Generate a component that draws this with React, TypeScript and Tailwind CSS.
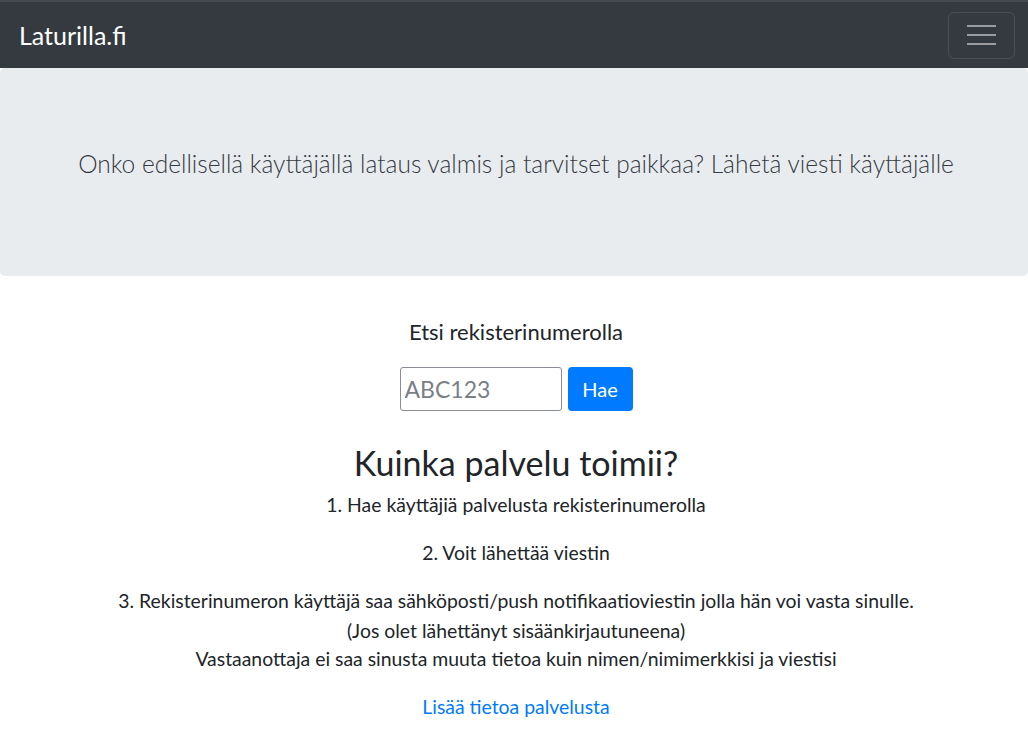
import React from "react";

const font = { fontFamily: "Lato, 'Open Sans', sans-serif" };

const Navbar = () => (
  <nav className="h-[68px] bg-[#343a40] border-t-2 border-[#45484f] flex items-center justify-between pl-[19px] pr-[13px]">
    <a className="text-white text-[25px] leading-none">Laturilla.fi</a>
    <button className="w-[67px] h-[47px] border border-white/10 rounded-[6px] flex flex-col items-center justify-center gap-[7px]">
      <span className="block w-[29px] h-[2px] bg-[#9a9ca0]" />
      <span className="block w-[29px] h-[2px] bg-[#9a9ca0]" />
      <span className="block w-[29px] h-[2px] bg-[#9a9ca0]" />
    </button>
  </nav>
);

export default function App() {
  return (
    <div style={font} className="min-h-[747px] bg-white text-[#212529]">
      <Navbar />
      <div className="bg-[#e9ecef] rounded-[5px] h-[208px] flex items-center justify-center pl-[4px]">
        <p className="text-[24.5px] font-light text-[#343a42] leading-[30px] -mt-[16px]">
          Onko edellisellä käyttäjällä lataus valmis ja tarvitset paikkaa? Lähetä viesti käyttäjälle
        </p>
      </div>

      <div className="flex flex-col items-center text-center pl-[4px]">
        <h5 className="mt-[44px] h-[24px] leading-[24px] text-[22px]">Etsi rekisterinumerolla</h5>
        <form className="mt-[23px] flex gap-[6px]" onSubmit={(e) => e.preventDefault()}>
          <input
            placeholder="ABC123"
            className="w-[162px] h-[44px] border border-[#8a8d93] rounded-[3px] px-[4px] text-[23px] placeholder:text-[#7a7f86] outline-none"
          />
          <button className="w-[65px] h-[44px] bg-[#007bff] text-white rounded-[4px] text-[20px]">Hae</button>
        </form>

        <h2 className="mt-[33px] h-[38px] leading-[38px] text-[34px]">Kuinka palvelu toimii?</h2>
        <p className="mt-[11px] h-[24px] leading-[24px] text-[19.4px]">1. Hae käyttäjiä palvelusta rekisterinumerolla</p>
        <p className="mt-[24px] h-[24px] leading-[24px] text-[19.4px]">2. Voit lähettää viestin</p>
        <div className="mt-[24px] text-[19.4px]">
          <p className="h-[24px] leading-[24px]">
            3. Rekisterinumeron käyttäjä saa sähköposti/push notifikaatioviestin jolla hän voi vasta sinulle.
          </p>
          <p className="mt-[6px] h-[24px] leading-[24px]">(Jos olet lähettänyt sisäänkirjautuneena)</p>
          <p className="mt-[4px] h-[24px] leading-[24px]">
            Vastaanottaja ei saa sinusta muuta tietoa kuin nimen/nimimerkkisi ja viestisi
          </p>
        </div>
        <a href="#" className="mt-[24px] h-[24px] leading-[24px] text-[19.4px] text-[#007bff]">
          Lisää tietoa palvelusta
        </a>
      </div>
    </div>
  );
}
